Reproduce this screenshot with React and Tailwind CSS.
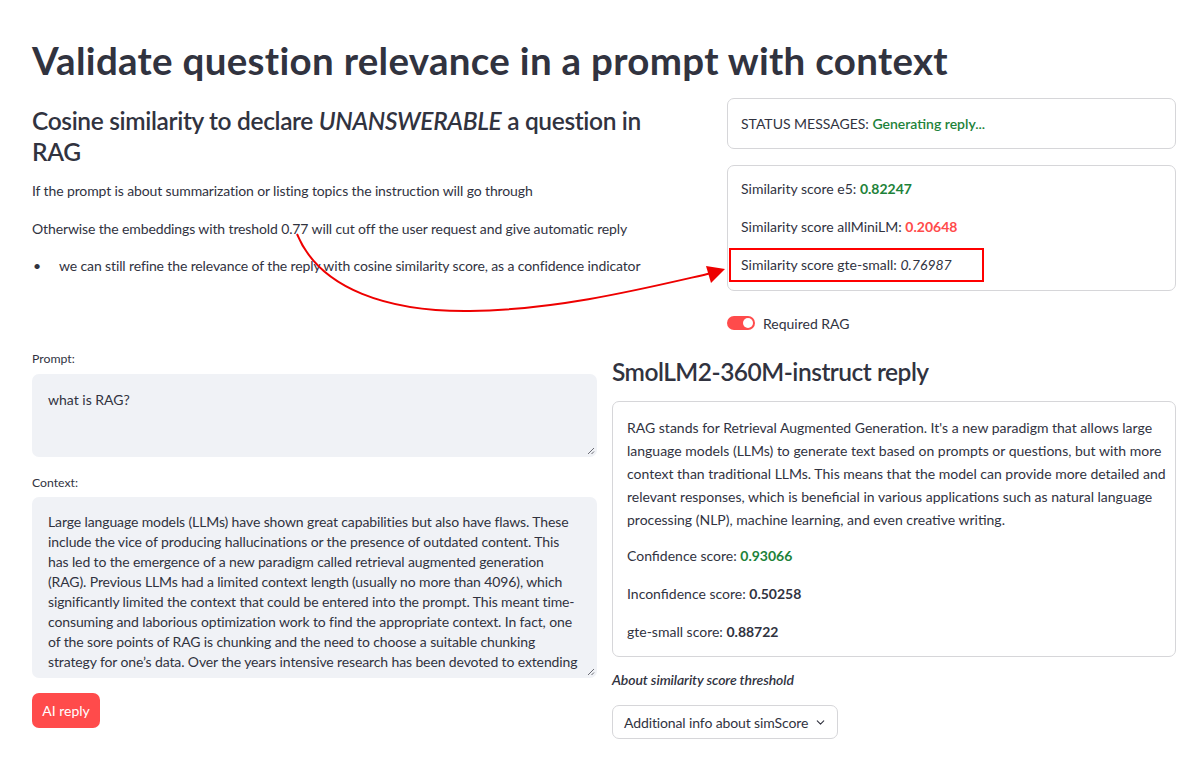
import React from "react";
import { ChevronDown } from "lucide-react";

const font = { fontFamily: "Lato, 'Noto Sans', sans-serif" };

function ResizeHandle() {
  return (
    <svg className="absolute right-[2px] bottom-[2px]" width="8" height="8" viewBox="0 0 8 8">
      <line x1="1" y1="7" x2="7" y2="1" stroke="#6b6c75" strokeWidth="1" />
      <line x1="4.5" y1="7" x2="7" y2="4.5" stroke="#6b6c75" strokeWidth="1" />
    </svg>
  );
}

const contextLines = [
  "Large language models (LLMs) have shown great capabilities but also have flaws. These",
  "include the vice of producing hallucinations or the presence of outdated content. This",
  "has led to the emergence of a new paradigm called retrieval augmented generation",
  "(RAG). Previous LLMs had a limited context length (usually no more than 4096), which",
  "significantly limited the context that could be entered into the prompt. This meant time-",
  "consuming and laborious optimization work to find the appropriate context. In fact, one",
  "of the sore points of RAG is chunking and the need to choose a suitable chunking",
  "strategy for one\u2019s data. Over the years intensive research has been devoted to extending",
];

const replyLines = [
  "RAG stands for Retrieval Augmented Generation. It's a new paradigm that allows large",
  "language models (LLMs) to generate text based on prompts or questions, but with more",
  "context than traditional LLMs. This means that the model can provide more detailed and",
  "relevant responses, which is beneficial in various applications such as natural language",
  "processing (NLP), machine learning, and even creative writing.",
];

export default function App() {
  return (
    <div className="relative w-[1201px] h-[762px] bg-white text-[#31333f] overflow-hidden" style={font}>
      <div className="ml-[32px] w-[1144px] pt-[37px]">
        <h1 className="text-[38.5px] leading-[46px] font-bold tracking-[0.3px] whitespace-nowrap">
          Validate question relevance in a prompt with context
        </h1>

        {/* Row 1 */}
        <div className="mt-[15px] flex items-start gap-[14px]">
          <div className="flex-1 pt-[7px]">
            <h3 className="text-[24.5px] leading-[31px] font-semibold tracking-[-0.35px]">
              Cosine similarity to declare <em className="font-semibold">UNANSWERABLE</em> a question in
              <br />
              RAG
            </h3>
            <div className="tracking-[-0.12px]">
              <p className="mt-[14px] text-[14px] leading-[20px]">
                If the prompt is about summarization or listing topics the instruction will go through
              </p>
              <p className="mt-[18px] text-[14px] leading-[20px]">
                Otherwise the embeddings with treshold 0.77 will cut off the user request and give automatic reply
              </p>
              <ul className="mt-[17px] text-[14px] leading-[20px]">
                <li className="flex">
                  <span className="w-[27px] pl-[1px]">•</span>
                  <span>we can still refine the relevance of the reply with cosine similarity score, as a confidence indicator</span>
                </li>
              </ul>
            </div>
          </div>

          <div className="w-[449px] flex flex-col">
            <div className="h-[51px] rounded-[7px] border border-[#d6d6d9] px-[13px] flex items-center text-[14px]">
              <span>
                STATUS MESSAGES: <span className="font-semibold text-[#1d8239]">Generating reply...</span>
              </span>
            </div>
            <div className="mt-[16px] h-[126px] rounded-[7px] border border-[#d6d6d9] px-[13px] pt-[13px] flex flex-col gap-[18px] text-[14px] leading-[20px]">
              <div>
                Similarity score e5: <span className="font-bold text-[#1d8239]">0.82247</span>
              </div>
              <div>
                Similarity score allMiniLM: <span className="font-bold text-[#ff4b4b]">0.20648</span>
              </div>
              <div className="relative">
                Similarity score gte-small: <em>0.76987</em>
                <div className="absolute left-[-12px] top-[-7px] w-[255px] h-[34px] border-2 border-[#ff0000]"></div>
              </div>
            </div>
            <div className="mt-[22px] h-[20px] flex items-center gap-[8px] text-[14px]">
              <div className="w-[28px] h-[14px] rounded-full bg-[#ff4b4b] flex items-center justify-end pr-[2px]">
                <div className="w-[10px] h-[10px] rounded-full bg-white"></div>
              </div>
              <span>Required RAG</span>
            </div>
          </div>
        </div>

        {/* Row 2 */}
        <div className="mt-[17px] flex items-start gap-[15px]">
          <div className="w-[565px] flex flex-col">
            <div className="text-[12.25px] leading-[17px]">Prompt:</div>
            <div className="relative mt-[7px] h-[83px] rounded-[7px] bg-[#f0f2f6] px-[16px] pt-[16px] text-[14px] leading-[20px]">
              what is RAG?
              <ResizeHandle />
            </div>
            <div className="mt-[17px] text-[12.25px] leading-[17px]">Context:</div>
            <div className="relative mt-[6px] h-[181px] rounded-[7px] bg-[#f0f2f6] overflow-hidden">
              <div className="px-[16px] pt-[15px] text-[14px] leading-[20px] tracking-[-0.12px]">
                {contextLines.map((l, i) => (
                  <div key={i} className="whitespace-nowrap">{l}</div>
                ))}
              </div>
              <ResizeHandle />
            </div>
            <div className="mt-[15px]">
              <button className="h-[35px] w-[68px] rounded-[7px] bg-[#ff4b4b] text-white text-[14px] flex items-center justify-center">
                AI reply
              </button>
            </div>
          </div>

          <div className="w-[564px] flex flex-col">
            <h3 className="mt-[6px] text-[24.5px] leading-[31px] font-semibold tracking-[-0.5px]">SmolLM2-360M-instruct reply</h3>
            <div className="mt-[14px] h-[256px] rounded-[7px] border border-[#d6d6d9] px-[14px] pt-[14px] text-[14px]">
              <div className="leading-[23px]">
                {replyLines.map((l, i) => (
                  <div key={i} className="whitespace-nowrap">{l}</div>
                ))}
              </div>
              <div className="mt-[15px] leading-[20px]">
                Confidence score: <span className="font-bold text-[#1d8239]">0.93066</span>
              </div>
              <div className="mt-[18px] leading-[20px]">
                Inconfidence score: <span className="font-bold">0.50258</span>
              </div>
              <div className="mt-[18px] leading-[20px]">
                gte-small score: <span className="font-bold">0.88722</span>
              </div>
            </div>
            <div className="mt-[13px] text-[14px] leading-[20px] font-semibold italic tracking-[-0.1px]">About similarity score threshold</div>
            <div className="mt-[15px]">
              <div className="inline-flex h-[34px] items-center gap-[6px] rounded-[7px] border border-[#d6d6d9] pl-[11px] pr-[10px] text-[14px] tracking-[-0.12px]">
                <span>Additional info about simScore</span>
                <ChevronDown size={13} strokeWidth={2} />
              </div>
            </div>
          </div>
        </div>
      </div>

      {/* Annotation arrow */}
      <svg className="absolute left-0 top-0 pointer-events-none" width="1201" height="762" viewBox="0 0 1201 762">
        <path
          d="M 297 234 C 320 290, 390 312, 470 311 C 560 310, 650 287, 712 273"
          fill="none"
          stroke="#ee0000"
          strokeWidth="2"
        />
        <polygon points="725,269 706,266 711,283" fill="#ee0000" />
      </svg>
    </div>
  );
}
